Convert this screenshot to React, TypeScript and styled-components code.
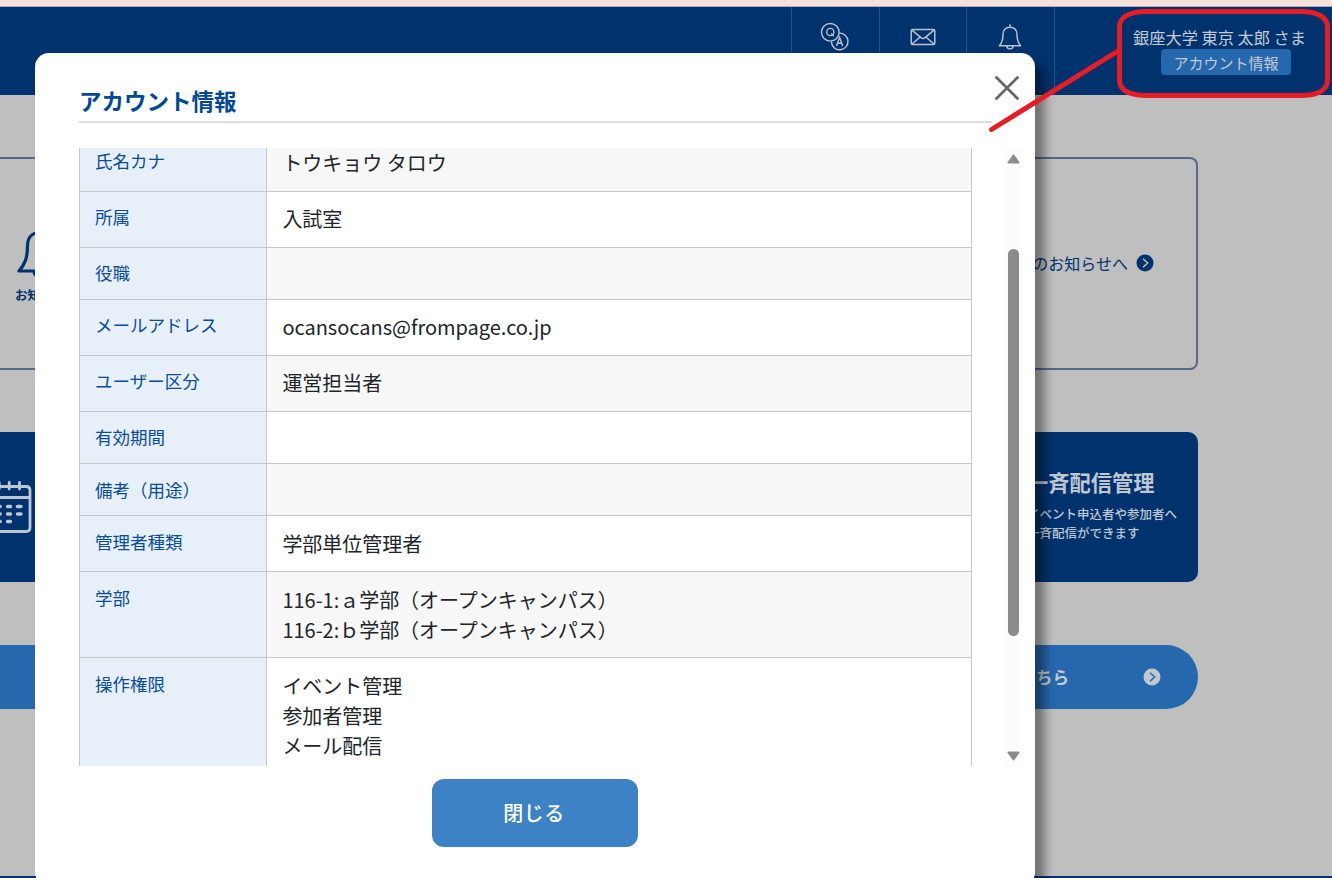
import React from "react";
import styled, { createGlobalStyle } from "styled-components";

const Global = createGlobalStyle`
  * { box-sizing: border-box; }
  body { margin: 0; background: #bfbfbf; font-family: "Noto Sans CJK JP", "Noto Sans", sans-serif; color: #212529; }
  h2, h3, p, dl, dt, dd { margin: 0; }
  button { font-family: inherit; border: 0; padding: 0; }
`;

const Page = styled.div`
  position: relative;
  width: 1332px;
  height: 878px;
  overflow: hidden;
  display: flex;
  flex-direction: column;
  background: #bfbfbf;
`;
const TopStrip = styled.div`
  height: 7px;
  flex: none;
  background: #f6e1da;
  border-bottom: 1px solid #a3abba;
`;
const Header = styled.header`
  height: 88px;
  flex: none;
  display: flex;
  justify-content: flex-end;
  background: #00336e;
  color: #c5cbd3;
`;
const NavCell = styled.div<{ $w: number }>`
  width: ${(p) => p.$w}px;
  border-left: 1px solid #2a5484;
  display: flex;
  justify-content: center;
  padding: 14px 1px 0 0;
`;
const UserArea = styled.div`
  width: 278px;
  border-left: 1px solid #2a5484;
  padding-left: 65px;
  display: flex;
  flex-direction: column;
  align-items: center;
`;
const UserName = styled.div`
  margin-top: 18px;
  height: 24px;
  line-height: 24px;
  font-size: 16.2px;
  white-space: nowrap;
  padding-right: 13px;
`;
const AccountButton = styled.button`
  width: 130px;
  height: 26px;
  border-radius: 4px;
  background: #2668ad;
  color: #c5cbd3;
  font-size: 15px;
  line-height: 26px;
  padding-top: 1px;
`;
const Content = styled.main`
  width: 1198px;
  padding-top: 62px;
  display: flex;
  flex-direction: column;
  flex: 1;
`;
const NoticeCard = styled.section`
  height: 213px;
  border: 2px solid #56678c;
  border-left: 0;
  border-radius: 0 8px 8px 0;
  display: flex;
  justify-content: space-between;
  align-items: center;
  padding-right: 42px;
`;
const NoticeLabel = styled.div`
  width: 50px;
  margin-left: 15px;
  padding-top: 3px;
  display: flex;
  flex-direction: column;
  align-items: center;
  gap: 5px;
  font-size: 12.5px;
  line-height: 19px;
  font-weight: 700;
  white-space: nowrap;
  color: #00336e;
`;
const NoticeLink = styled.div`
  display: flex;
  align-items: center;
  gap: 8px;
  font-size: 16px;
  padding-bottom: 1px;
  color: #00336e;
`;
const Cards = styled.div`
  margin-top: 62px;
  height: 150px;
  display: flex;
  justify-content: space-between;
`;
const Card = styled.article<{ $side: "left" | "right" }>`
  width: 360px;
  height: 150px;
  background: #00336e;
  color: #bfc7d2;
  border-radius: ${(p) => (p.$side === "left" ? "0" : "10px")};
  padding: ${(p) => (p.$side === "left" ? "48px 0 0" : "34px 0 0 189px")};
  overflow: hidden;
`;
const CardTitle = styled.h3`
  font-size: 21.25px;
  line-height: 32px;
  font-weight: 700;
  white-space: nowrap;
`;
const CardText = styled.p`
  margin-top: 6px;
  font-size: 12.5px;
  line-height: 19px;
  font-weight: 500;
  white-space: nowrap;
`;
const Banner = styled.div`
  margin-top: 63px;
  height: 64px;
  border-radius: 0 32px 32px 0;
  background: #2668ad;
  color: #c5cbd3;
  display: flex;
  align-items: center;
  justify-content: flex-end;
  gap: 74px;
  padding: 0 37px 1px 0;
  font-size: 16.5px;
  font-weight: 700;
`;
const FooterLine = styled.footer`
  height: 2px;
  flex: none;
  background: #00336e;
`;

const Dialog = styled.section`
  position: absolute;
  left: 35px;
  top: 53px;
  width: 1000px;
  height: 833px;
  border-radius: 14px;
  background: #fff;
  box-shadow: 10px 10px 10px rgba(0, 0, 0, 0.4);
  display: flex;
  flex-direction: column;
`;
const DialogHeader = styled.div`
  height: 70px;
  flex: none;
  margin: 0 43px 0 44px;
  border-bottom: 2px solid #ddd;
  display: flex;
  justify-content: space-between;
`;
const DialogTitle = styled.h2`
  margin-top: 30px;
  font-size: 22.5px;
  line-height: 34px;
  font-weight: 700;
  color: #004896;
`;
const CloseIcon = styled.svg`
  flex: none;
  margin: 22px -28px 0 0;
`;
const DialogBody = styled.div`
  margin: 25px 13px 0 44px;
  height: 618px;
  flex: none;
  display: flex;
  justify-content: space-between;
  overflow: hidden;
`;
const Table = styled.dl`
  width: 893px;
  margin-top: -13.3px;
  border: 1px solid #c5c8cb;
  border-bottom: 0;
  flex: none;
`;
const Row = styled.div`
  display: grid;
  grid-template-columns: 187px 1fr;
  border-bottom: 1px solid #c5c8cb;
`;
const Label = styled.dt`
  padding: 12.5px 15px;
  font-size: 17.5px;
  line-height: 26.25px;
  background: #e7f0f8;
  border-right: 1px solid #c5c8cb;
  color: #0a4c98;
`;
const Value = styled.dd<{ $shade: boolean }>`
  padding: 12.5px 15px 12.5px 15.4px;
  font-size: 20px;
  line-height: 30px;
  letter-spacing: -0.02px;
  background: ${(p) => (p.$shade ? "#f7f7f7" : "#fff")};
`;
const ScrollTrack = styled.div`
  width: 17px;
  background: #fcfcfc;
  display: flex;
  flex-direction: column;
  align-items: center;
  padding: 6px 0 5px;
`;
const ScrollThumb = styled.div`
  width: 11px;
  height: 387px;
  margin: 85px 0 auto;
  border-radius: 6px;
  background: #8b8b8b;
`;
const CloseButton = styled.button`
  width: 206px;
  height: 68px;
  flex: none;
  margin: 13px 0 0 397px;
  border-radius: 12px;
  background: #3d82c5;
  color: #fff;
  font-size: 20px;
  font-weight: 500;
  letter-spacing: 0.5px;
  padding: 0 2px 1px 0;
`;
const Callout = styled.svg`
  position: absolute;
  left: 0;
  top: 0;
  pointer-events: none;
`;

const rows: { label: string; lines: string[] }[] = [
  { label: "氏名カナ", lines: ["トウキョウ タロウ"] },
  { label: "所属", lines: ["入試室"] },
  { label: "役職", lines: [] },
  { label: "メールアドレス", lines: ["ocansocans@frompage.co.jp"] },
  { label: "ユーザー区分", lines: ["運営担当者"] },
  { label: "有効期間", lines: [] },
  { label: "備考（用途）", lines: [] },
  { label: "管理者種類", lines: ["学部単位管理者"] },
  { label: "学部", lines: ["116-1:ａ学部（オープンキャンパス）", "116-2:ｂ学部（オープンキャンパス）"] },
  { label: "操作権限", lines: ["イベント管理", "参加者管理", "メール配信"] },
];

const QaIcon = () => (
  <svg width="30" height="30" viewBox="0 0 30 30" fill="none" stroke="#b9c2ce" strokeWidth="1.4">
    <circle cx="10.3" cy="11.3" r="8.8" />
    <path d="M19 12.2a8.3 8.3 0 1 1-7.6 8.2" />
    <circle cx="10.3" cy="11" r="3.6" />
    <path d="M11.2 12.6l2.6 2.5M16.5 25l3.1-8.6L22.7 25M17.5 22.2h4.2" />
  </svg>
);
const MailIcon = () => (
  <svg width="26" height="30" viewBox="0 0 26 30" fill="none" stroke="#b9c2ce" strokeWidth="1.5" strokeLinejoin="round">
    <rect x="1.2" y="8.5" width="23.6" height="15" rx="1.5" />
    <path d="M2 9.2l9.300 7.600q1.700 1.200 3.400 0L24 9.200M2 23l8.200-7M24 23l-8.200-7" />
  </svg>
);
const BellIcon = () => (
  <svg width="24" height="30" viewBox="0 0 24 30" fill="none" stroke="#b9c2ce" strokeWidth="1.5" strokeLinejoin="round">
    <path d="M12 3.200v3M12 6.200c-4.600 0-7 3.200-7 7.300 0 5.500-.6 8-3.600 11.300h21.200c-3-3.300-3.600-5.800-3.600-11.300 0-4.100-2.400-7.300-7-7.300zM8.800 25c.4 3.900 6 3.900 6.400 0" />
  </svg>
);
const BigBell = () => (
  <svg width="46" height="54" viewBox="0 0 46 54" fill="none" stroke="#00336e" strokeWidth="3.2" strokeLinejoin="round">
    <path d="M23 1v5M23 6.500C13.500 6.500 10.500 13 10.500 20c0 12-2.500 18-8.500 25h42c-6-7-8.500-13-8.500-25 0-7-3-13.500-12.500-13.500zM17 45c0 8 12 8 12 0" />
  </svg>
);
const Chevron = ({ bg, fg }: { bg: string; fg: string }) => (
  <svg width="18" height="18" viewBox="0 0 18 18" fill="none">
    <circle cx="9" cy="9" r="8.5" fill={bg} />
    <path d="M7 4.700L11.700 9 7 13.300" stroke={fg} strokeWidth="1.5" />
  </svg>
);
const CalendarIcon = () => (
  <svg width="32" height="54" viewBox="0 0 32 54" fill="none" stroke="#bfc7d2" strokeWidth="2.800" strokeLinecap="round">
    <path d="M-4 6.500h30q4 0 4 4v37q0 4-4 4H-4M-4 17.500h34M-.8 2.500v6.500M9.200 2.500v6.500M19.500 2.500v6.500" />
    <path strokeWidth="3.400" d="M-2.500 26.500h2.700M7.500 26.500h3M17.500 26.500h3.500M-2.500 34h2.700M7.500 34h3M17.500 34h3.500M-2.500 41.500h2.700M7.500 41.500h3" />
  </svg>
);

export default function App() {
  return (
    <Page>
      <Global />
      <TopStrip />
      <Header>
        <NavCell $w={88}><QaIcon /></NavCell>
        <NavCell $w={87}><MailIcon /></NavCell>
        <NavCell $w={88}><BellIcon /></NavCell>
        <UserArea>
          <UserName>銀座大学 東京 太郎 さま</UserName>
          <AccountButton>アカウント情報</AccountButton>
        </UserArea>
      </Header>
      <Content>
        <NoticeCard>
          <NoticeLabel>
            <BigBell />
            お知らせ
          </NoticeLabel>
          <NoticeLink>
            のお知らせへ
            <Chevron bg="#00336e" fg="#bfbfbf" />
          </NoticeLink>
        </NoticeCard>
        <Cards>
          <Card $side="left"><CalendarIcon /></Card>
          <Card $side="right">
            <CardTitle>一斉配信管理</CardTitle>
            <CardText>イベント申込者や参加者へ<br />一斉配信ができます</CardText>
          </Card>
        </Cards>
        <Banner>
          こちら
          <Chevron bg="#c0c8d0" fg="#2668ad" />
        </Banner>
      </Content>
      <FooterLine />

      <Dialog role="dialog">
        <DialogHeader>
          <DialogTitle>アカウント情報</DialogTitle>
          <CloseIcon width="26" height="26" viewBox="0 0 26 26" stroke="#666" strokeWidth="2.8" strokeLinecap="round">
            <path d="M2.500 2.500l21 21M23.500 2.500l-21 21" />
          </CloseIcon>
        </DialogHeader>
        <DialogBody>
          <Table>
            {rows.map((row, i) => (
              <Row key={row.label}>
                <Label>{row.label}</Label>
                <Value $shade={i % 2 === 0}>
                  {row.lines.map((line) => <div key={line}>{line}</div>)}
                </Value>
              </Row>
            ))}
          </Table>
          <ScrollTrack>
            <svg width="13" height="10" viewBox="0 0 13 10" fill="#8b8b8b" stroke="#8b8b8b" strokeLinejoin="round" strokeWidth="2"><path d="M1.500 8.500h10L6.500 1.500z" /></svg>
            <ScrollThumb />
            <svg width="13" height="10" viewBox="0 0 13 10" fill="#8b8b8b" stroke="#8b8b8b" strokeLinejoin="round" strokeWidth="2"><path d="M1.500 1.500h10L6.500 8.500z" /></svg>
          </ScrollTrack>
        </DialogBody>
        <CloseButton>閉じる</CloseButton>
      </Dialog>

      <Callout width="1332" height="140" fill="none" stroke="#e81c24" strokeWidth="5" strokeLinecap="round">
        <path d="M1145 11.500H1303C1319 12 1327.500 18 1327.500 27V80C1327.500 90 1318 95 1303 95.500H1145C1128 95 1119.500 90 1119.500 80V27C1119.500 18 1128 12 1145 11.500Z" />
        <path d="M1118 51L991.500 129.500" />
      </Callout>
    </Page>
  );
}
